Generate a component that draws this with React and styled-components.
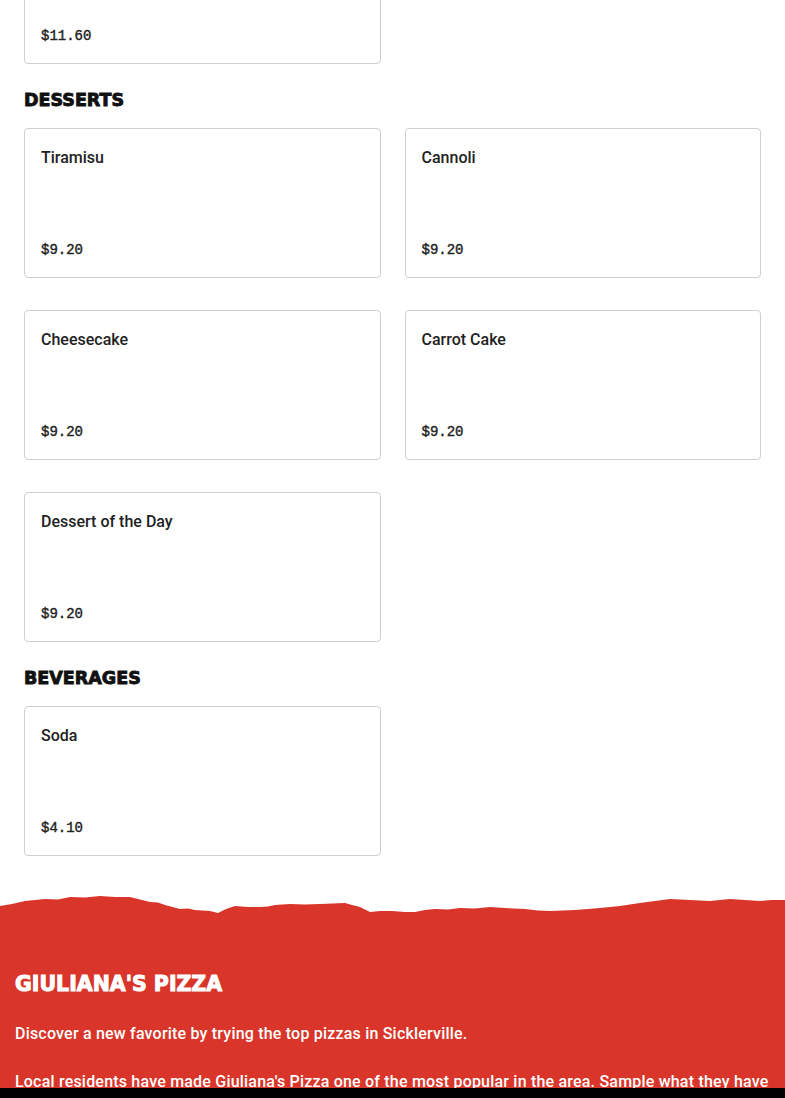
import React from 'react';
import styled, { createGlobalStyle } from 'styled-components';

const GlobalStyle = createGlobalStyle`
    body {
        margin: 0;
        background: #fff;
        font-family: Roboto, "Liberation Sans", Arial, sans-serif;
        color: #1f1f1f;
    }
`;

const Menu = styled.main`
    padding: 0 24px;
`;

const ScrolledTop = styled.div`
    margin-top: -86px;
`;

const SectionTitle = styled.h2`
    margin: 24px 0 16px;
    font-family: "DejaVu Sans", "Liberation Sans", sans-serif;
    font-weight: 900;
    font-size: 17.5px;
    line-height: 24px;
    -webkit-text-stroke: 0.9px #111;
    text-transform: uppercase;
    color: #111;
`;

const Grid = styled.div`
    display: grid;
    grid-template-columns: 1fr 1fr;
    column-gap: 24px;
    row-gap: 32px;
`;

const Card = styled.div`
    box-sizing: border-box;
    height: 150px;
    padding: 17px 16px 15px;
    border: 1px solid #cfcfcf;
    border-radius: 4px;
    display: flex;
    flex-direction: column;
    justify-content: space-between;
`;

const ItemName = styled.div`
    font-size: 16px;
    font-weight: 500;
    line-height: 24px;
    color: #222;
`;

const Price = styled.div`
    font-family: "Liberation Mono", "DejaVu Sans Mono", monospace;
    font-size: 14px;
    line-height: 24px;
    -webkit-text-stroke: 0.4px #222;
    color: #222;
`;

const Footer = styled.footer`
    margin-top: 38px;
`;

const Edge = styled.svg`
    display: block;
    width: 100%;
    height: 22px;
`;

const FooterBody = styled.div`
    background: #d9352a;
    padding: 54px 15px 40px;
    color: #fff;
`;

const Brand = styled.h3`
    margin: 0;
    font-family: "DejaVu Sans", "Liberation Sans", sans-serif;
    font-weight: 900;
    font-size: 20.5px;
    line-height: 28px;
    -webkit-text-stroke: 1px #fff;
    text-transform: uppercase;
`;

const Blurb = styled.p`
    margin: 24px 0 0;
    font-size: 16px;
    font-weight: 500;
    line-height: 24px;
    letter-spacing: 0.2px;
`;

const BottomBar = styled.div`
    position: fixed;
    left: 0;
    right: 0;
    bottom: 0;
    height: 10px;
    background: #000;
`;

const desserts = [
    { name: 'Tiramisu', price: '$9.20' },
    { name: 'Cannoli', price: '$9.20' },
    { name: 'Cheesecake', price: '$9.20' },
    { name: 'Carrot Cake', price: '$9.20' },
    { name: 'Dessert of the Day', price: '$9.20' },
];

const beverages = [{ name: 'Soda', price: '$4.10' }];

// torn paper top edge of the footer (y is relative to the svg top)
const edgePoints = [
    [0, 12], [12, 10], [25, 7], [45, 5], [58, 5.5], [70, 3], [85, 3.5], [100, 2],
    [115, 3], [130, 3], [142, 6], [150, 8], [158, 8.5], [165, 11], [180, 15],
    [188, 14.5], [195, 16], [210, 17], [218, 19], [226, 15], [235, 12], [248, 13],
    [260, 13], [268, 12.5], [275, 11], [290, 10], [305, 10.5], [320, 10], [345, 9],
    [352, 11], [360, 13], [370, 18], [380, 17], [392, 17], [405, 18], [415, 18],
    [425, 16], [435, 15], [448, 15.5], [460, 14], [475, 14.5], [490, 13], [505, 14],
    [525, 15], [538, 16.5], [550, 17], [563, 16.5], [575, 16], [600, 14], [620, 12],
    [640, 9], [655, 7], [670, 5], [680, 5.5], [690, 6], [710, 7], [730, 5],
    [745, 6], [760, 7], [772, 6], [785, 6],
];

const edgePath =
    'M0 22 ' + edgePoints.map(([x, y]) => `L${x} ${y}`).join(' ') + ' L785 22 Z';

const ItemGrid = ({ items }) => (
    <Grid>
        {items.map((item) => (
            <Card key={item.name}>
                <ItemName>{item.name}</ItemName>
                <Price>{item.price}</Price>
            </Card>
        ))}
    </Grid>
);

const App = () => {
    return (
        <>
            <GlobalStyle />
            <Menu>
                <ScrolledTop>
                    <Grid>
                        <Card>
                            <ItemName></ItemName>
                            <Price>$11.60</Price>
                        </Card>
                    </Grid>
                </ScrolledTop>
                <SectionTitle>Desserts</SectionTitle>
                <ItemGrid items={desserts} />
                <SectionTitle>Beverages</SectionTitle>
                <ItemGrid items={beverages} />
            </Menu>
            <Footer>
                <Edge viewBox="0 0 785 22" preserveAspectRatio="none">
                    <path d={edgePath} fill="#d9352a" />
                </Edge>
                <FooterBody>
                    <Brand>Giuliana's Pizza</Brand>
                    <Blurb>Discover a new favorite by trying the top pizzas in Sicklerville.</Blurb>
                    <Blurb>
                        Local residents have made Giuliana's Pizza one of the most popular in the area. Sample what they have
                        been raving about and order online today.
                    </Blurb>
                </FooterBody>
            </Footer>
            <BottomBar />
        </>
    );
};

export default App;
